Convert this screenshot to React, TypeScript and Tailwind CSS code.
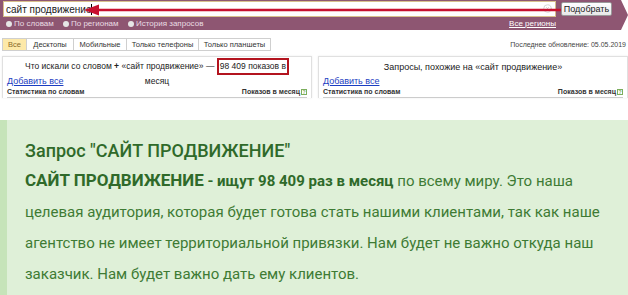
import { CircleX } from 'lucide-react';

const TABS = [
  { label: 'Все', w: 'w-[23px]' },
  { label: 'Десктопы', w: 'w-[47px]' },
  { label: 'Мобильные', w: 'w-[53px]' },
  { label: 'Только телефоны', w: 'w-[72px]' },
  { label: 'Только планшеты', w: 'w-[72px]' },
];
const MODES = ['По словам', 'По регионам', 'История запросов'];

function Panel({ title }: { title: React.ReactNode }) {
  return (
    <div className="flex-1 h-[42px] flex flex-col border border-[#e0e0e0] border-b-0 shadow-[0_0_2px_rgba(0,0,0,0.08)] px-[4px] pt-[1px]">
      <div className="h-[18px] text-center text-[8.5px] leading-[12px] text-[#222]">{title}</div>
      <div className="text-[9px] leading-[11px] text-[#1a3dc1] underline">Добавить все</div>
      <div className="mt-auto flex items-center justify-between border-b border-[#ccc] pb-[1px] text-[7px] leading-[8px] font-bold text-[#333]">
        <span>Статистика по словам</span>
        <span className="flex items-center gap-[1px]">
          Показов в месяц
          <span className="inline-block w-[6px] h-[6px] border border-[#7cae5d] text-[5px] leading-[4px] text-[#7cae5d] text-center">?</span>
        </span>
      </div>
    </div>
  );
}

export default function App() {
  return (
    <div className="w-[628px] h-[295px] overflow-hidden bg-white flex flex-col" style={{ fontFamily: '"Liberation Sans", Arial, sans-serif' }}>
      {/* search bar */}
      <div className="relative h-[30px] shrink-0 bg-[#8e5672] [clip-path:polygon(0_0,621px_0,628px_15px,621px_30px,0_30px)]">
        <div className="flex items-center pt-[1px] pl-[3px]">
          <div className="relative w-[553px] h-[16px] bg-white border border-[#d8c08c] flex items-center pl-[2px] text-[10px] text-[#222]">
            сайт продвижение<span className="w-px h-[11px] bg-black" />
            <CircleX className="absolute right-[3px] top-[2px] w-[9px] h-[9px] text-[#c8c8c8]" />
          </div>
          <div className="ml-[5px] h-[14px] w-[51px] bg-gradient-to-b from-white to-[#e8e8e8] border border-[#9a9a9a] rounded-[2px] text-[9px] leading-[12px] text-center text-[#222]">
            Подобрать
          </div>
        </div>
        <div className="flex items-center h-[12px] mt-[1px] pl-[6px] text-[8px] text-[#eadde3]">
          {MODES.map((m, i) => (
            <span key={m} className={`flex items-center gap-[2px] ${i === 0 ? 'w-[57px]' : i === 1 ? 'w-[65px]' : ''}`}>
              <span className={`w-[6px] h-[6px] rounded-full bg-[#e6e6e6] ${i === 0 ? 'border-[2px] border-[#e6e6e6] bg-[#6a3a52]' : ''}`} />
              {m}
            </span>
          ))}
          <span className="ml-auto mr-[72px] underline text-white">Все регионы</span>
        </div>
        {/* annotation arrow */}
        <svg className="absolute left-[84px] top-[4px]" width="478" height="12" viewBox="0 0 478 12">
          <line x1="12" y1="6" x2="477" y2="6" stroke="#c8102e" strokeWidth="2.5" />
          <polygon points="0,6 15,0.5 15,11.5" fill="#c8102e" />
        </svg>
      </div>

      {/* tabs */}
      <div className="flex items-center justify-between h-[13px] mt-[8px] pl-[2px] pr-[2px]">
        <div className="flex h-[13px] border border-[#cfcfcf] text-[7.5px] leading-[11px] text-[#333]">
          {TABS.map((t, i) => (
            <span key={t.label} className={`${t.w} text-center ${i > 0 ? 'border-l border-[#cfcfcf]' : 'bg-[#fde9a9] text-[#8a6a2a]'}`}>{t.label}</span>
          ))}
        </div>
        <span className="text-[7px] leading-[10px] text-[#444]">Последнее обновление: 05.05.2019</span>
      </div>

      {/* panels */}
      <div className="flex gap-[6px] pl-[2px] mt-[5px]">
        <Panel
          title={
            <>
              Что искали со словом <span className="font-bold">+</span> «сайт продвижение» —{' '}
              <span className="inline-block border-[2px] border-[#b3141f] px-[1px] leading-[13px]">98 409 показов в</span>
              <br />
              месяц
            </>
          }
        />
        <Panel title={<span className="inline-block pt-[3px] text-[9px]">Запросы, похожие на «сайт продвижение»</span>} />
      </div>

      {/* quote */}
      <div className="mt-[22px] flex-1 bg-[#dff0d8] border-l-[7px] border-[#c6e4b9] pl-[18px] pt-[16px] text-[#3e7b34]" style={{ fontFamily: 'Roboto, "Noto Sans", sans-serif' }}>
        <div className="text-[18px] leading-[30px] font-medium text-[#2f6a2a]">Запрос "САЙТ ПРОДВИЖЕНИЕ"</div>
        <p className="text-[15px] leading-[31px] pr-[20px]">
          <span className="text-[17px] leading-[20px] font-bold text-[#2f6a2a]">САЙТ ПРОДВИЖЕНИЕ</span>
          <span className="font-bold text-[#2f6a2a]"> - ищут 98 409 раз в месяц</span> по всему миру. Это наша целевая аудитория, которая будет готова стать нашими клиентами, так как наше агентство не имеет территориальной привязки. Нам будет не важно откуда наш заказчик. Нам будет важно дать ему клиентов.
        </p>
      </div>
    </div>
  );
}
